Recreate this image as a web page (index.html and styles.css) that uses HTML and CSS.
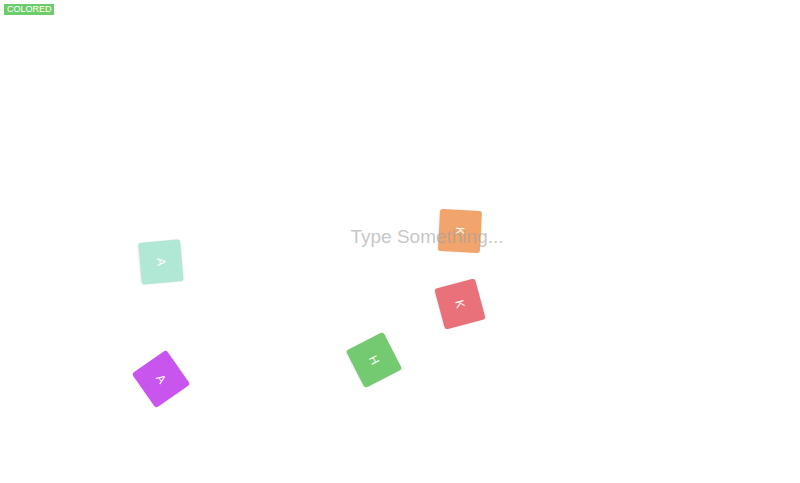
FILE: index.html
```html
<!DOCTYPE html>
<html>
<head>
<meta charset="utf-8">
<link rel="stylesheet" href="styles.css">
</head>
<body>
<div class="stage">
  <span class="badge">COLORED</span>
  <div class="prompt">Type Something...</div>
  <div class="tile teal" style="left:140px;top:241px;transform:rotate(85deg)">A</div>
  <div class="tile orange" style="left:439px;top:210px;transform:rotate(93deg)">K</div>
  <div class="tile red" style="left:439px;top:283px;transform:rotate(75deg)">K</div>
  <div class="tile green" style="left:353px;top:339px;transform:rotate(63deg)">H</div>
  <div class="tile purple" style="left:140px;top:358px;transform:rotate(55deg)">A</div>
</div>
</body>
</html>
```
FILE: styles.css
```css
html, body {
  margin: 0;
  padding: 0;
  background: #fff;
}
.stage {
  position: relative;
  width: 800px;
  height: 483px;
  overflow: hidden;
  display: flex;
  align-items: center;
  justify-content: center;
  font-family: "Liberation Sans", Arial, sans-serif;
}
.badge {
  position: absolute;
  left: 4px;
  top: 4px;
  height: 11px;
  padding: 0 2px 0 3px;
  background: #6ccd6c;
  color: #fff;
  font-size: 9px;
  line-height: 11px;
}
.prompt {
  position: relative;
  z-index: 2;
  margin-left: 54px;
  margin-top: -10px;
  color: rgba(160, 160, 160, 0.6);
  font-size: 19px;
}
.tile {
  position: absolute;
  z-index: 1;
  width: 42px;
  height: 42px;
  border-radius: 3px;
  color: #fff;
  font-size: 12px;
  line-height: 42px;
  text-align: center;
  box-shadow: 0 1px 2px rgba(0,0,0,0.08);
}
.teal { background: #b1e7d5; }
.orange { background: #f2a46d; }
.red { background: #e8717a; }
.green { background: #74ca70; }
.purple { background: #c955ef; }
```
